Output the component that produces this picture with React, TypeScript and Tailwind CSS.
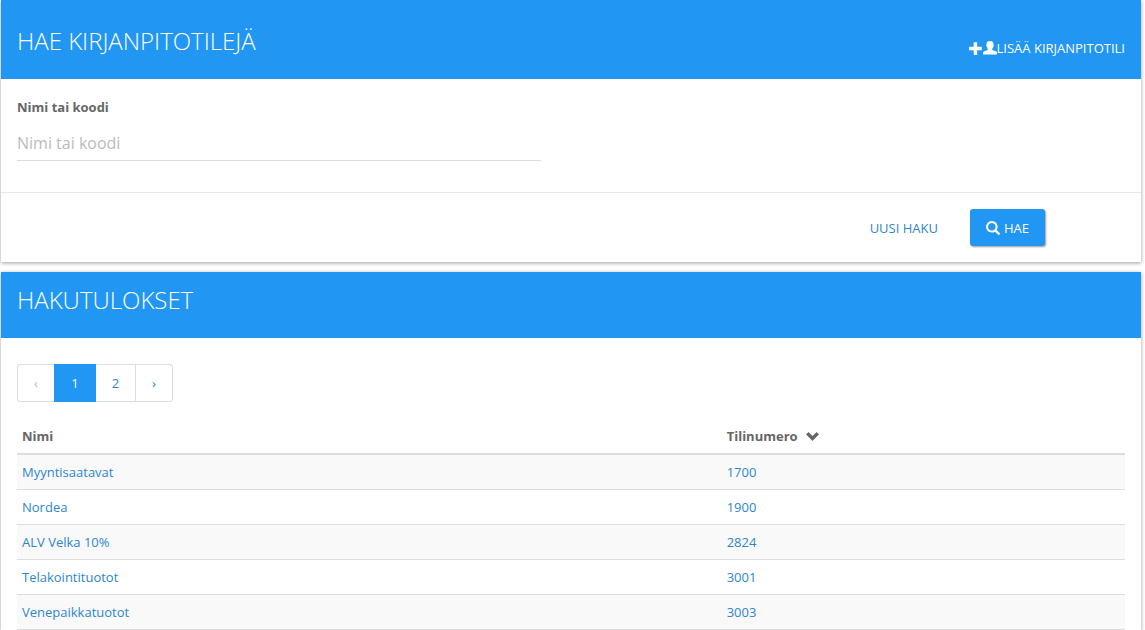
import React, { useState } from "react";

type IconProps = { className?: string };

function Glyph({ d, className = "" }: { d: string; className?: string }) {
  return (
    <svg viewBox="0 0 1200 1200" fill="currentColor" aria-hidden="true" className={`inline-block shrink-0 ${className}`}>
      <path transform="translate(0 1200) scale(1 -1)" d={d} />
    </svg>
  );
}

const PlusIcon = ({ className }: IconProps) => (
  <Glyph
    className={className}
    d="M450 1100h200q21 0 35.5 -14.5t14.5 -35.5v-350h350q21 0 35.5 -14.5t14.5 -35.5v-200q0 -21 -14.5 -35.5t-35.5 -14.5h-350v-350q0 -21 -14.5 -35.5t-35.5 -14.5h-200q-21 0 -35.5 14.5t-14.5 35.5v350h-350q-21 0 -35.5 14.5t-14.5 35.5v200q0 21 14.5 35.5t35.5 14.5h350v350q0 21 14.5 35.5t35.5 14.5z"
  />
);

const UserIcon = ({ className }: IconProps) => (
  <Glyph
    className={className}
    d="M0 50v150q0 60 60 90l300 120q60 24 60 80q0 40 -30 75q-60 75 -75 165q-40 20 -40 80q0 45 25 65v65q0 260 300 260t300 -260v-65q25 -20 25 -65q0 -60 -40 -80q-15 -90 -75 -165q-30 -35 -30 -75q0 -56 60 -80l300 -120q60 -30 60 -90v-150z"
  />
);

const SearchIcon = ({ className }: IconProps) => (
  <Glyph
    className={className}
    d="M500 1191q100 0 191 -39t156.5 -104.5t104.5 -156.5t39 -191l-1 -2l1 -5q0 -141 -78 -262l275 -274q23 -26 22.5 -44.5t-22.5 -42.5l-59 -58q-26 -20 -46.5 -20t-39.5 20l-275 274q-119 -77 -261 -77l-5 1l-2 -1q-100 0 -191 39t-156.5 104.5t-104.5 156.5t-39 191t39 191t104.5 156.5t156.5 104.5t191 39zM500 1022q-88 0 -162 -43t-117 -117t-43 -162t43 -162t117 -117t162 -43t162 43t117 117t43 162t-43 162t-117 117t-162 43z"
  />
);

const ChevronDownIcon = ({ className }: IconProps) => (
  <Glyph
    className={className}
    d="M240 1000l360 -355l360 355q16 16 32 0l190 -190q16 -16 0 -32l-562 -560q-20 -18 -40 0l-562 560q-16 16 0 32l190 190q16 16 32 0z"
  />
);

const accounts = [
  { name: "Myyntisaatavat", number: "1700" },
  { name: "Nordea", number: "1900" },
  { name: "ALV Velka 10%", number: "2824" },
  { name: "Telakointituotot", number: "3001" },
  { name: "Venepaikkatuotot", number: "3003" },
];

const card = "bg-white shadow-[0_1px_4px_rgba(0,0,0,0.4)]";
const pageButton = "h-[38px] border-y border-r border-[#ddd] text-center";

export default function App() {
  const [query, setQuery] = useState("");

  return (
    <main className="ml-px mr-1 flex flex-col gap-[10px] font-['Open_Sans',sans-serif] text-[13px] leading-6 text-[#666]">
      <section className={card}>
        <header className="flex items-center justify-between bg-[#2196f3] px-4 pt-4 pb-[13px] text-white">
          <h1 className="text-2xl leading-[50px] font-light">HAE KIRJANPITOTILEJÄ</h1>
          <a href="#lisaa" className="flex items-center pt-[14px]">
            <PlusIcon className="size-[14px]" />
            <UserIcon className="size-[14px]" />
            LISÄÄ KIRJANPITOTILI
          </a>
        </header>
        <form onSubmit={(e) => e.preventDefault()}>
          <div className="px-4 pt-4 pb-[31px]">
            <div className="w-1/2 pr-[30px]">
              <label htmlFor="query" className="block font-bold">
                Nimi tai koodi
              </label>
              <input
                id="query"
                value={query}
                onChange={(e) => setQuery(e.target.value)}
                placeholder="Nimi tai koodi"
                className="mt-1 block h-[38px] w-full border-b border-[#ddd] pt-[2px] text-base text-[#666] outline-none placeholder:text-[#bbb]"
              />
            </div>
          </div>
          <div className="flex justify-end gap-4 border-t border-[#e8e8e8] py-4 pr-24">
            <button type="button" onClick={() => setQuery("")} className="px-4 text-[#2d86cf]">
              UUSI HAKU
            </button>
            <button
              type="submit"
              className="flex h-[37px] items-center gap-1 rounded-[3px] bg-[#2196f3] px-4 text-white shadow-[1px_1px_2px_rgba(0,0,0,0.4)]"
            >
              <SearchIcon className="size-[14px]" />
              HAE
            </button>
          </div>
        </form>
      </section>

      <section className={card}>
        <header className="bg-[#2196f3] px-4 pt-4 pb-[26px] text-white">
          <h2 className="text-2xl leading-6 font-light">HAKUTULOKSET</h2>
        </header>
        <div className="px-4 pt-[26px]">
          <nav aria-label="Sivut" className="flex text-[#2d86cf]">
            <button
              type="button"
              disabled
              aria-label="Edellinen"
              className="h-[38px] w-[37px] rounded-l-[3px] border-y border-l border-[#ddd] text-center text-[#bbb]"
            >
              ‹
            </button>
            <button type="button" aria-current="page" className="h-[38px] w-[42px] bg-[#2196f3] text-center text-white">
              1
            </button>
            <button type="button" className={`${pageButton} w-10`}>
              2
            </button>
            <button type="button" aria-label="Seuraava" className={`${pageButton} w-[37px] rounded-r-[3px]`}>
              ›
            </button>
          </nav>
          <table className="mt-[22px] w-full table-fixed border-separate border-spacing-0 text-left">
            <colgroup>
              <col className="w-[63.6%]" />
              <col />
            </colgroup>
            <thead>
              <tr>
                <th className="border-b-2 border-[#ddd] px-[5px] pb-[5px] font-bold">Nimi</th>
                <th className="border-b-2 border-[#ddd] px-[5px] pb-[5px] font-bold">
                  <button type="button" className="flex items-center gap-2">
                    Tilinumero
                    <ChevronDownIcon className="size-[13px]" />
                  </button>
                </th>
              </tr>
            </thead>
            <tbody className="text-[#2d86cf]">
              {accounts.map((account) => (
                <tr key={account.number} className="odd:bg-[#f9f9f9]">
                  <td className="border-b border-[#ddd] p-[5px]">
                    <a href={`#${account.number}`}>{account.name}</a>
                  </td>
                  <td className="border-b border-[#ddd] p-[5px]">
                    <a href={`#${account.number}`}>{account.number}</a>
                  </td>
                </tr>
              ))}
            </tbody>
          </table>
        </div>
      </section>
    </main>
  );
}
